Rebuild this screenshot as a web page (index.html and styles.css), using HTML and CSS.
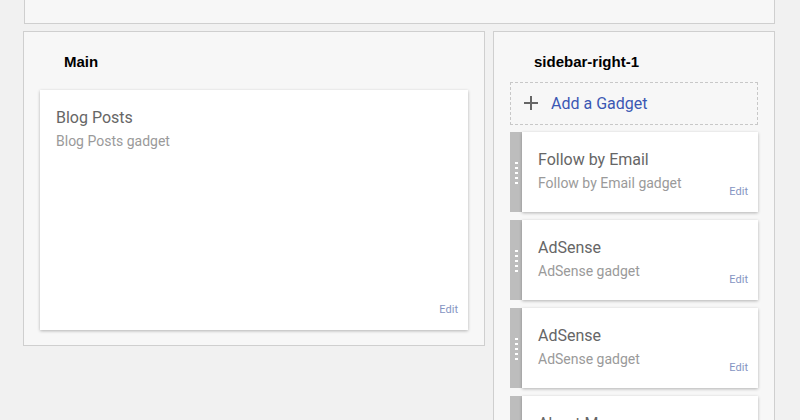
FILE: index.html
```html
<!DOCTYPE html>
<html>
<head>
<meta charset="utf-8">
<link rel="stylesheet" href="styles.css">
</head>
<body>
  <div class="top-panel"></div>
  <div class="row">
    <section class="panel main">
      <h2 class="panel-title">Main</h2>
      <div class="card big">
        <div class="card-text">
          <div class="card-title">Blog Posts</div>
          <div class="card-sub">Blog Posts gadget</div>
        </div>
        <a class="edit">Edit</a>
      </div>
    </section>
    <section class="panel sidebar">
      <h2 class="panel-title side">sidebar-right-1</h2>
      <div class="add-gadget">
        <svg class="plus" width="14" height="14" viewBox="0 0 14 14"><path d="M7 0v14M0 7h14" stroke="#666" stroke-width="2"/></svg>
        <span>Add a Gadget</span>
      </div>
      <div class="gadget">
        <div class="handle"><i></i><i></i><i></i><i></i><i></i></div>
        <div class="card">
          <div class="card-text">
            <div class="card-title">Follow by Email</div>
            <div class="card-sub">Follow by Email gadget</div>
          </div>
          <a class="edit">Edit</a>
        </div>
      </div>
      <div class="gadget">
        <div class="handle"><i></i><i></i><i></i><i></i><i></i></div>
        <div class="card">
          <div class="card-text">
            <div class="card-title">AdSense</div>
            <div class="card-sub">AdSense gadget</div>
          </div>
          <a class="edit">Edit</a>
        </div>
      </div>
      <div class="gadget">
        <div class="handle"><i></i><i></i><i></i><i></i><i></i></div>
        <div class="card">
          <div class="card-text">
            <div class="card-title">AdSense</div>
            <div class="card-sub">AdSense gadget</div>
          </div>
          <a class="edit">Edit</a>
        </div>
      </div>
      <div class="gadget">
        <div class="handle"><i></i><i></i><i></i><i></i><i></i></div>
        <div class="card">
          <div class="card-text">
            <div class="card-title">About Me</div>
            <div class="card-sub">Profile gadget</div>
          </div>
          <a class="edit">Edit</a>
        </div>
      </div>
    </section>
  </div>
</body>
</html>
```

FILE: styles.css
```css
html, body {
  margin: 0;
  padding: 0;
  background: #f1f1f1;
  font-family: Roboto, "Liberation Sans", Arial, sans-serif;
}

.top-panel {
  margin-left: 24px;
  width: 749px;
  height: 23px;
  background: #f7f7f7;
  border: 1px solid #cfcfcf;
  border-top: none;
}

.row {
  display: flex;
  align-items: flex-start;
  gap: 8px;
  margin: 7px 0 0 23px;
}

.panel {
  background: #f7f7f7;
  border: 1px solid #cfcfcf;
  box-sizing: border-box;
  padding: 20px 16px 15px 16px;
}

.main {
  width: 462px;
}

.sidebar {
  width: 282px;
  padding-right: 16px;
}

.panel-title {
  margin: 0 0 18px 0;
  padding-left: 24px;
  font-family: "Liberation Sans", Arial, sans-serif;
  font-weight: bold;
  font-size: 15px;
  line-height: 20px;
  color: #000;
}

.panel-title.side {
  margin-bottom: 10px;
}

.card {
  display: flex;
  justify-content: space-between;
  background: #fff;
  box-shadow: 0 1px 3px rgba(0, 0, 0, 0.28);
  box-sizing: border-box;
  height: 80px;
}

.card.big {
  height: 240px;
}

.card-text {
  padding: 18px 0 0 16px;
}

.card-title {
  font-size: 16px;
  line-height: 20px;
  color: #666;
}

.card-sub {
  margin-top: 3px;
  font-size: 14px;
  line-height: 20px;
  color: #9a9a9a;
}

.edit {
  align-self: flex-end;
  margin: 0 10px 14px 0;
  font-size: 11px;
  line-height: 13px;
  color: #8594c2;
}

.add-gadget {
  display: flex;
  align-items: center;
  gap: 13px;
  height: 40px;
  padding-bottom: 1px;
  border: 1px dashed #c8c8c8;
  padding-left: 13px;
  margin-bottom: 7px;
  font-size: 16px;
  color: #3b57b3;
}

.plus {
  flex: none;
}

.gadget {
  display: flex;
  margin-bottom: 8px;
}

.gadget .card {
  flex: 1;
}

.handle {
  width: 12px;
  flex: none;
  background: #bdbdbd;
  display: flex;
  flex-direction: column;
  align-items: center;
  justify-content: center;
  gap: 3px;
  padding-top: 1px;
  box-sizing: border-box;
}

.handle i {
  display: block;
  width: 3px;
  height: 2px;
  background: #fff;
}
```
